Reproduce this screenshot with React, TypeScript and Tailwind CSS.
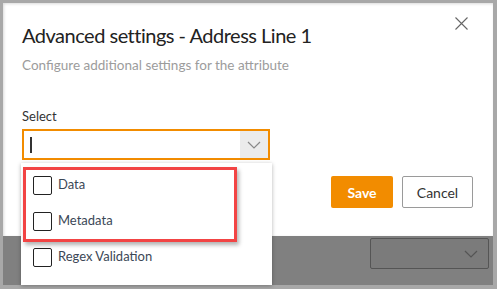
import React from "react";

function Chevron({ className }: { className?: string }) {
  return (
    <svg width="14" height="8" viewBox="0 0 14 8" className={className} fill="none">
      <path d="M1 1 L7 7 L13 1" stroke="currentColor" strokeWidth="1.2" />
    </svg>
  );
}

function Check({ label }: { label: string }) {
  return (
    <div className="flex items-center h-[36px] pl-[12px]">
      <span className="w-[19px] h-[19px] border border-[#222] rounded-[2px] bg-white" />
      <span className="ml-[6px] text-[13px] text-[#3b4756]">{label}</span>
    </div>
  );
}

export default function App() {
  return (
    <div
      className="w-[497px] h-[289px] bg-[#a8a8a8] pt-[3px] pl-[3px] pr-[4px] pb-[4px] relative overflow-hidden"
      style={{ fontFamily: "Lato, 'Noto Sans', sans-serif" }}
    >
      <div className="flex flex-col h-full">
        <div className="relative h-[233px] bg-white shadow-[inset_1px_1px_3px_rgba(0,0,0,0.15)] pl-[19px] pr-[20px]">
          <svg
            className="absolute left-[452px] top-[14px] text-[#666]"
            width="13"
            height="13"
            viewBox="0 0 13 13"
          >
            <path d="M0.5 0.5 L12.5 12.5 M12.5 0.5 L0.5 12.5" stroke="currentColor" strokeWidth="1.1" />
          </svg>
          <div className="pt-[20px] text-[20px] leading-[24px] tracking-[-0.5px] text-[#222]">
            Advanced settings - Address Line 1
          </div>
          <div className="mt-[10px] text-[13.5px] leading-[16px] text-[#9c9c9c]">
            Configure additional settings for the attribute
          </div>
          <div className="mt-[35px] text-[13px] leading-[16px] text-[#333]">Select</div>
          <div className="mt-[5px] w-[248px] h-[31px] border-2 border-[#f28c00] flex items-stretch">
            <div className="flex-1 flex items-center pl-[6px]">
              <span className="w-[2px] h-[16px] bg-[#333]" />
            </div>
            <div className="w-[28px] bg-[#ebebeb] flex items-center justify-center text-[#888]">
              <Chevron />
            </div>
          </div>
          <div className="mt-[16px] flex justify-end gap-[9px]">
            <button className="w-[62px] h-[32px] rounded-[2px] bg-[#f28c00] text-white font-bold text-[14px]">
              Save
            </button>
            <button className="w-[71px] h-[32px] rounded-[2px] border border-[#9a9a9a] bg-white text-[#333] text-[14px]">
              Cancel
            </button>
          </div>
        </div>
        <div className="flex-1 bg-[#808080] flex justify-end items-start pt-[2px] pr-[4px]">
          <div className="w-[119px] h-[31px] border border-[#555] rounded-[2px] bg-[#7b7b7b] flex items-center justify-end pr-[10px] text-[#555]">
            <Chevron />
          </div>
        </div>
      </div>

      <div className="absolute left-[21px] top-[163px] w-[251px] h-[122px] bg-white shadow-[0_1px_4px_rgba(0,0,0,0.3)] pt-[4px]">
        <Check label="Data" />
        <Check label="Metadata" />
        <Check label="Regex Validation" />
        <div className="absolute left-[2px] top-[4px] w-[214px] h-[75px] border-[3px] border-[#f24444] shadow-[2px_3px_4px_rgba(0,0,0,0.3)]" />
      </div>
    </div>
  );
}
